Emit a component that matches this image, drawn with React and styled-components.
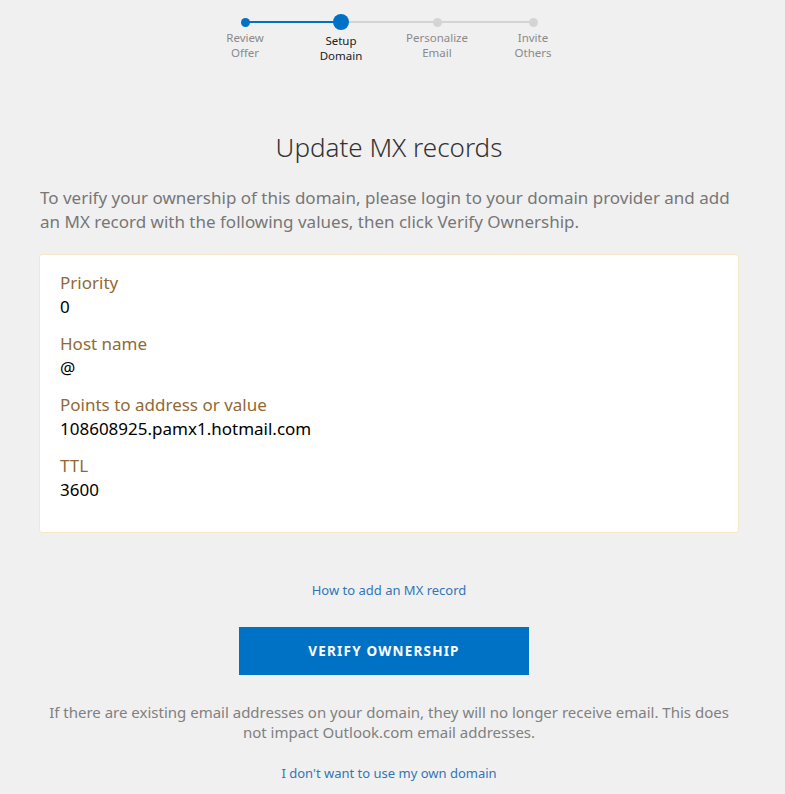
import React from 'react';
import styled, { createGlobalStyle } from 'styled-components';

const GlobalStyle = createGlobalStyle`
    html, body { margin:0; padding:0; background:#f0f0f0; }
    body { font-family: "Segoe UI", "Noto Sans", "Open Sans", sans-serif; color:#333; }
    * { box-sizing:border-box; }
`;

const Page = styled.div`
    width:700px;
    margin-left:39px;
    display:flex;
    flex-direction:column;
    align-items:center;
`;

const Stepper = styled.div`
    display:flex;
    padding-top:14px;
`;

const Step = styled.div`
    width:96px;
    display:flex;
    flex-direction:column;
    align-items:center;
`;

const DotRow = styled.div`
    position:relative;
    width:100%;
    height:16px;
    display:flex;
    align-items:center;
    justify-content:center;
    &:before, &:after{
        content:'';
        position:absolute;
        top:50%;
        height:2px;
        margin-top:-1px;
        width:50%;
    }
    &:before{ left:0; background:${p => p.$left || 'transparent'}; }
    &:after{ right:0; background:${p => p.$right || 'transparent'}; }
`;

const Dot = styled.span`
    position:relative;
    z-index:1;
    width:${p => (p.$big ? 16 : 9)}px;
    height:${p => (p.$big ? 16 : 9)}px;
    border-radius:50%;
    background:${p => (p.$done ? '#0072c6' : '#d4d4d4')};
`;

const StepLabel = styled.div`
    margin-top:${p => (p.$active ? 4 : 1)}px;
    font-size:11.5px;
    line-height:14.5px;
    text-align:center;
    color:${p => (p.$active ? '#222' : '#8a8a8a')};
`;

const Title = styled.h1`
    margin:67px 0 0;
    font-size:26px;
    font-weight:300;
    line-height:34px;
    color:#333;
`;

const Intro = styled.p`
    align-self:stretch;
    margin:22px 0 0 1px;
    font-size:17px;
    line-height:24px;
    color:#777;
`;

const Card = styled.div`
    align-self:stretch;
    margin-top:20px;
    background:#fff;
    border:1px solid #f6e7c9;
    border-radius:3px;
    padding:16px 20px 30px;
    display:flex;
    flex-direction:column;
    gap:13px;
`;

const Field = styled.div`
    display:flex;
    flex-direction:column;
`;

const FieldLabel = styled.div`
    font-size:17px;
    line-height:24px;
    color:#8f6a37;
`;

const FieldValue = styled.div`
    font-size:17px;
    line-height:24px;
    color:#000;
`;

const HelpLink = styled.a`
    margin-top:48px;
    font-size:13px;
    line-height:18px;
    color:#3276b8;
    text-decoration:none;
`;

const VerifyButton = styled.button`
    margin-top:28px;
    margin-right:10px;
    width:290px;
    height:48px;
    border:none;
    background:#0072c6;
    color:#fff;
    font-family:inherit;
    font-size:13.5px;
    font-weight:700;
    letter-spacing:1.2px;
    text-transform:uppercase;
`;

const Note = styled.p`
    margin:27px 0 0;
    font-size:15px;
    line-height:20px;
    text-align:center;
    color:#808080;
`;

const SkipLink = styled.a`
    margin-top:22px;
    font-size:13px;
    line-height:18px;
    color:#3276b8;
    text-decoration:none;
`;

const steps = [
    { label: ['Review', 'Offer'], done: true, right: '#0072c6' },
    { label: ['Setup', 'Domain'], done: true, active: true, left: '#0072c6', right: '#d4d4d4' },
    { label: ['Personalize', 'Email'], left: '#d4d4d4', right: '#d4d4d4' },
    { label: ['Invite', 'Others'], left: '#d4d4d4' },
];

const records = [
    { label: 'Priority', value: '0' },
    { label: 'Host name', value: '@' },
    { label: 'Points to address or value', value: '108608925.pamx1.hotmail.com' },
    { label: 'TTL', value: '3600' },
];

function App(){
    return(
        <>
            <GlobalStyle />
            <Page>
                <Stepper>
                    {steps.map(s => (
                        <Step key={s.label[0]}>
                            <DotRow $left={s.left} $right={s.right}>
                                <Dot $big={s.active} $done={s.done} />
                            </DotRow>
                            <StepLabel $active={s.active}>{s.label[0]}<br />{s.label[1]}</StepLabel>
                        </Step>
                    ))}
                </Stepper>
                <Title>Update MX records</Title>
                <Intro>To verify your ownership of this domain, please login to your domain provider and add an MX record with the following values, then click Verify Ownership.</Intro>
                <Card>
                    {records.map(r => (
                        <Field key={r.label}>
                            <FieldLabel>{r.label}</FieldLabel>
                            <FieldValue>{r.value}</FieldValue>
                        </Field>
                    ))}
                </Card>
                <HelpLink href="#">How to add an MX record</HelpLink>
                <VerifyButton>Verify Ownership</VerifyButton>
                <Note>If there are existing email addresses on your domain, they will no longer receive email. This does not impact Outlook.com email addresses.</Note>
                <SkipLink href="#">I don't want to use my own domain</SkipLink>
            </Page>
        </>
    );
}

export default App;
